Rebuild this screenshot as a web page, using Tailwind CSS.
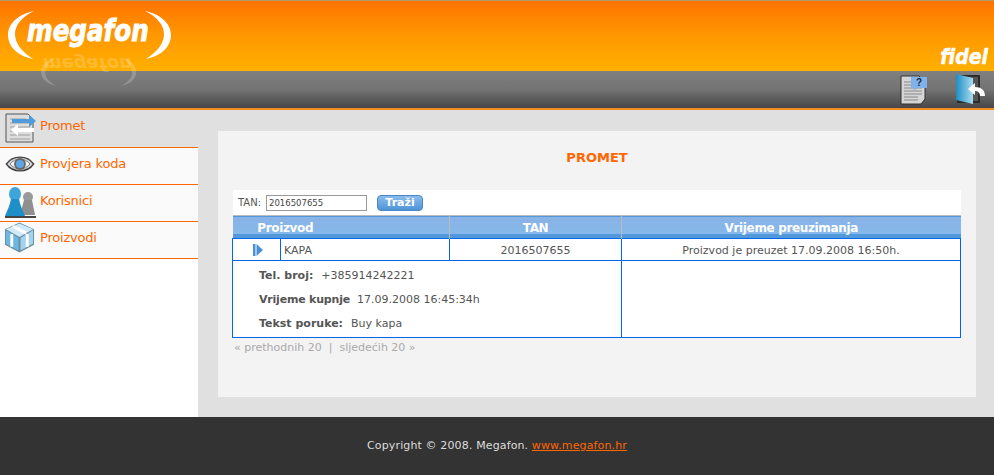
<!DOCTYPE html>
<html lang="en">
<head>
  <meta charset="UTF-8" />
  <title>Megafon Fidel</title>
  <script src="https://cdn.jsdelivr.net/npm/@tailwindcss/browser@4"></script>
</head>
<body class="bg-[#e0e0e0] font-['DejaVu_Sans',sans-serif] text-[#555] overflow-hidden">
  <div class="flex h-[475px] w-[994px] flex-col">
    <!-- Header -->
    <header class="relative h-[110px] shrink-0 overflow-hidden border-b-2 border-[#f58a1f]">
      <div class="h-px bg-[#b09a70]"></div>
      <div class="flex h-[70px] items-end justify-end bg-gradient-to-b from-[#ff7300] via-[#ff9800] to-[#ffb000] pr-[6px]">
        <span class="mb-[3px] origin-right scale-x-[0.9] text-[21px] leading-[22px] font-bold italic text-white [-webkit-text-stroke:0.5px_white]">fidel</span>
      </div>
      <div class="flex h-[37px] items-center justify-end gap-[26px] bg-gradient-to-b from-[#808080] via-[#737373] to-[#474747] pr-[8px]">
        <svg width="30" height="30" viewBox="0 0 30 30">
          <path d="M2 1h18l6 6v17l-4 5H2z" fill="#d5d5d5" stroke="#333" stroke-width="1"/>
          <path d="M5 7h14M5 10h14M5 13h18M5 16h18M5 19h18M5 22h14M5 25h14" stroke="#8a8a8a" stroke-width="1.2"/>
          <path d="M12 2h16v11H18l-3 3v-3h-3z" fill="#7fb2ea"/>
          <text x="20" y="11" font-size="10" font-weight="700" fill="#1d2b40" text-anchor="middle" font-family="Liberation Sans">?</text>
        </svg>
        <svg width="31" height="31" viewBox="0 0 31 31">
          <defs><linearGradient id="door" x1="0" x2="1"><stop offset="0" stop-color="#1f8ec4"/><stop offset="1" stop-color="#a8dcf0"/></linearGradient></defs>
          <rect x="3" y="2" width="21" height="26" fill="#555" stroke="#2c2c2c" stroke-width="2"/>
          <path d="M1 0l17 4v26L1 26z" fill="url(#door)"/>
          <path d="M13 15l7-6v4c6 0 10 3 10 9h-5c0-3-2-5-5-5v4z" fill="#fff"/>
        </svg>
      </div>
      <!-- logo over the orange and grey bands, with its reflection -->
      <div class="absolute top-[11px] left-[8px] h-[48px] w-[164px] text-white">
        <svg class="absolute inset-0" width="164" height="48" viewBox="0 0 164 48" fill="#fff">
          <path d="M26 0C8 4 0 14 0 24c0 11 9 21 25 24C13 40 7 32 7 23 7 14 14 6 26 0z"/>
          <path d="M137 0c18 4 26 14 26 24 0 11-9 21-25 24 12-8 18-16 18-25 0-9-7-17-19-23z"/>
        </svg>
        <span class="absolute top-[-2px] left-[19px] origin-left scale-x-[0.82] text-[30px] leading-[44px] font-bold italic [-webkit-text-stroke:1px_white]">megafon</span>
      </div>
      <div class="absolute top-[58px] left-[19px] h-[28px] w-[140px] -scale-y-100 text-white/20">
        <svg class="absolute inset-0" width="140" height="28" viewBox="0 0 164 48" fill="currentColor">
          <path d="M26 0C8 4 0 14 0 24c0 11 9 21 25 24C13 40 7 32 7 23 7 14 14 6 26 0z"/>
          <path d="M137 0c18 4 26 14 26 24 0 11-9 21-25 24 12-8 18-16 18-25 0-9-7-17-19-23z"/>
        </svg>
        <span class="absolute bottom-[-4px] left-[24px] text-[18px] leading-[20px] font-bold italic">megafon</span>
      </div>
    </header>

    <div class="flex min-h-0 flex-1">
      <!-- Sidebar -->
      <nav class="w-[198px] shrink-0 bg-white text-[13px] tracking-[-0.2px] text-[#ff6600]">
        <a class="flex h-[38px] items-center gap-[4px] border-b border-[#ff6600] bg-[#e0e0e0] pb-[5px] pl-[5px]">
          <svg class="mt-[3px] self-start" width="31" height="31" viewBox="0 0 31 31">
            <path d="M1 1h22l5 5v23H1z" fill="#ddd" stroke="#555"/>
            <path d="M5 6h16M5 10h20M5 14h20M5 18h20M5 22h20M5 26h20" stroke="#a0a0a0"/>
            <path d="M7 6h17V2l7 6-7 6v-4H7z" fill="#4f9bdc"/>
            <path d="M29 15H13v-4l-7 6 7 6v-4h16z" fill="#fff"/>
          </svg>
          <span>Promet</span>
        </a>
        <a class="flex h-[37px] items-center gap-[4px] border-b border-[#ff6600] bg-[#fafafa] pb-[5px] pl-[4px]">
          <svg class="mt-[6px] self-start" width="32" height="20" viewBox="0 0 32 22">
            <path d="M1 11C8 1 24 1 31 11 24 21 8 21 1 11z" fill="#d8d8d8" stroke="#444" stroke-width="1.5"/>
            <path d="M5 11C10 4 22 4 27 11 22 18 10 18 5 11z" fill="#f2f2f2" stroke="#777"/>
            <circle cx="16" cy="11" r="6.500" fill="#666"/>
            <circle cx="16" cy="11" r="4.500" fill="#5ea6e4"/>
          </svg>
          <span>Provjera koda</span>
        </a>
        <a class="flex h-[37px] items-center gap-[4px] border-b border-[#ff6600] bg-[#fafafa] pb-[5px] pl-[5px]">
          <svg class="mt-[2px] self-start" width="31" height="31" viewBox="0 0 31 31">
            <circle cx="23" cy="10" r="5" fill="#9a9a9a"/>
            <path d="M19 13h8l3 15h-15z" fill="#8f8f8f"/>
            <ellipse cx="10" cy="7" rx="6" ry="7" fill="#3da5d8"/>
            <path d="M6 12h8c1 6 4 12 6 17H0c2-5 5-11 6-17z" fill="#1f8fc9"/>
            <path d="M0 29h31v2H0z" fill="#444"/>
          </svg>
          <span>Korisnici</span>
        </a>
        <a class="flex h-[37px] items-center gap-[5px] border-b border-[#ff6600] bg-[#fafafa] pb-[5px] pl-[5px]">
          <svg class="self-start" width="30" height="31" viewBox="0 0 31 31">
            <path d="M15 0l15 7v16l-15 8-15-8V7z" fill="#6a8ea3"/>
            <path d="M15 1l14 6-14 8L1 7z" fill="#cfeaf8"/>
            <path d="M1 8l13 8v13L1 22z" fill="#6bb8e2"/>
            <path d="M29 8l-13 8v13l13-7z" fill="#a5d3ee"/>
            <path d="M7 12v13M23 12v13M8 4l14 7" stroke="#fff" stroke-width="3"/>
          </svg>
          <span>Proizvodi</span>
        </a>
      </nav>

      <!-- Main panel -->
      <main class="flex-1 pt-[21px] pr-[18px] pl-[20px]">
        <section class="h-[266px] bg-[#f3f3f3] pt-[19px] pr-[15px] pl-[15px]">
          <h2 class="h-[40px] text-center text-[13px] leading-[16px] font-bold text-[#ff6600]">PROMET</h2>
          <div class="flex h-[25px] items-center gap-[10px] bg-white pl-[5px] text-[10px] text-[#555]">
            <label class="flex items-center gap-[5px]">TAN:
              <input value="2016507655" class="h-[16px] w-[101px] border border-[#999] bg-white px-[2px] text-[8.500px] text-[#444]" />
            </label>
            <button class="mt-[1px] h-[16px] w-[46px] rounded-[4px] border border-[#4a86c5] bg-gradient-to-b from-[#8bbdec] to-[#4f94d8] text-[11px] leading-[14px] font-bold text-white">Traži</button>
          </div>
          <table class="ml-[-1px] w-[729px] table-fixed border-collapse text-[11px]">
            <colgroup><col class="w-[48px]"/><col class="w-[169px]"/><col class="w-[172px]"/><col/></colgroup>
            <thead class="text-[12px] tracking-[-0.35px] text-white">
              <tr class="h-[23px] border-t border-[#bbb] bg-[linear-gradient(#8ab2e6_0,#85b8ea_17px,#5299dc_17px)] leading-[20px]">
                <th colspan="2" class="pt-[2px] pr-[111px] font-bold">Proizvod</th>
                <th class="border-x border-[#bbb] pt-[2px] font-bold">TAN</th>
                <th class="pt-[2px] font-bold">Vrijeme preuzimanja</th>
              </tr>
            </thead>
            <tbody class="border border-[#0066ee]">
              <tr class="h-[22px] border-b border-[#0066ee] bg-white">
                <td class="border-r border-[#0066ee]">
                  <svg class="ml-[20px]" width="10" height="12" viewBox="0 0 10 12"><path d="M0 0h2.500v12H0zM3.500 0L10 6l-6.500 6z" fill="#4a90d9"/></svg>
                </td>
                <td class="pt-[3px] pl-[3px]">KAPA</td>
                <td class="border-x border-[#0066ee] pt-[3px] text-center">2016507655</td>
                <td class="pt-[3px] text-center">Proizvod je preuzet 17.09.2008 16:50h.</td>
              </tr>
              <tr class="h-[77px] bg-white align-top">
                <td colspan="3" class="pt-[3px] pl-[26px] leading-[24px]">
                  <div class="flex gap-[8px]"><b class="font-bold">Tel. broj:</b><span>+385914242221</span></div>
                  <div class="flex gap-[7px]"><b class="font-bold tracking-[-0.2px]">Vrijeme kupnje</b><span>17.09.2008 16:45:34h</span></div>
                  <div class="flex gap-[8px]"><b class="font-bold">Tekst poruke:</b><span>Buy kapa</span></div>
                </td>
                <td class="border-l border-[#0066ee]"></td>
              </tr>
            </tbody>
          </table>
          <p class="ml-[1px] pt-[2px] text-[11px] leading-[16px] text-[#aaa]">« prethodnih 20&nbsp; |&nbsp; sljedećih 20 »</p>
        </section>
      </main>
    </div>

    <!-- Footer -->
    <footer class="flex h-[58px] shrink-0 items-center justify-center bg-[#333] pt-[1px] text-[11px] tracking-[0.13px] text-[#ddd]">
      <p>Copyright © 2008. Megafon. <a class="text-[#ff6600] underline">www.megafon.hr</a></p>
    </footer>
  </div>
</body>
</html>
